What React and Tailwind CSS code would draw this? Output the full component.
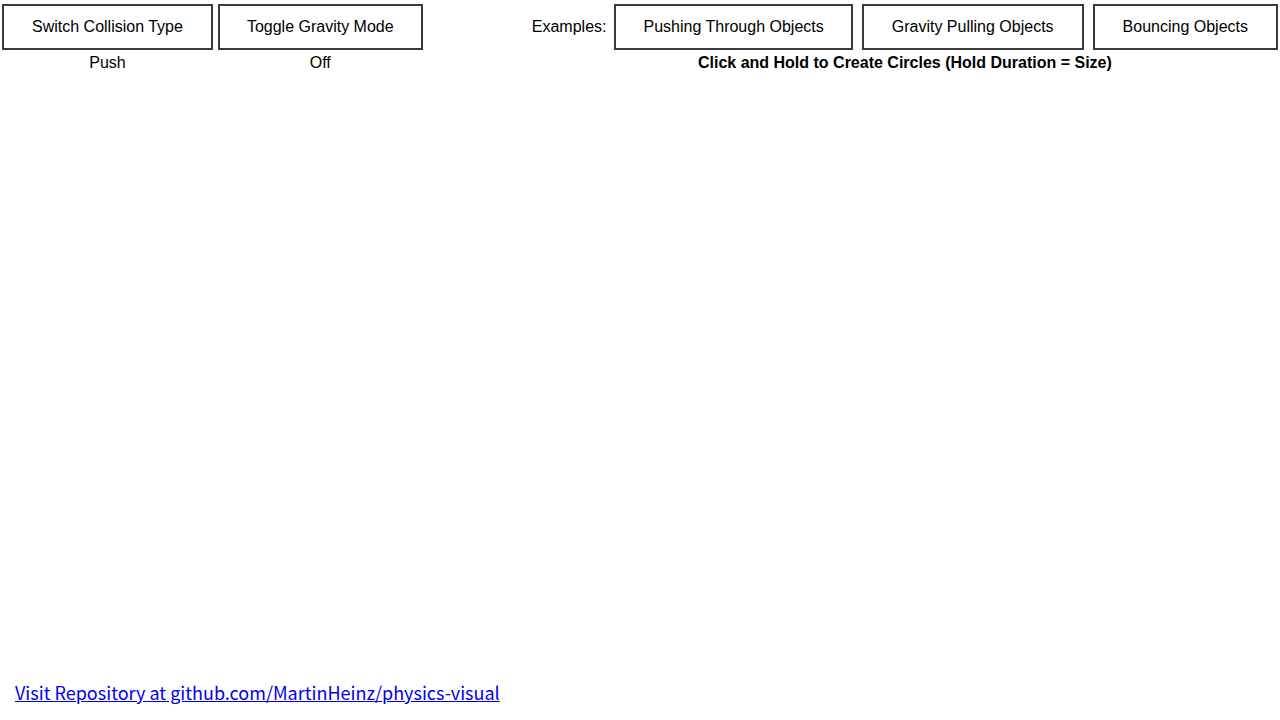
const btn =
  'border-2 border-[#3a3a3a] bg-white h-[46px] text-[16px] text-black whitespace-nowrap';

function ControlColumn({ label, value, pad }) {
  return (
    <div className="flex flex-col items-center">
      <button type="button" className={`${btn} ${pad}`}>
        {label}
      </button>
      <span className="mt-[2px] text-[16px] leading-[22px]">{value}</span>
    </div>
  );
}

export default function App() {
  const examples = [
    { name: 'Pushing Through Objects', pad: 'px-[27px]' },
    { name: 'Gravity Pulling Objects', pad: 'px-[28px]' },
    { name: 'Bouncing Objects', pad: 'px-[28px]' },
  ];

  return (
    <div className="flex h-screen flex-col bg-white text-black font-['Liberation_Sans',Arial,sans-serif]">
      <div className="flex items-start justify-between pl-[2px] pr-[2px] pt-[4px]">
        <div className="flex gap-[5px]">
          <ControlColumn label="Switch Collision Type" value="Push" pad="px-[28px]" />
          <ControlColumn label="Toggle Gravity Mode" value="Off" pad="px-[27px]" />
        </div>

        <div className="flex flex-col items-center">
          <div className="flex items-center gap-[9px]">
            <span className="mr-[-1px] text-[16px]">Examples:</span>
            {examples.map((ex) => (
              <button key={ex.name} type="button" className={`${btn} ${ex.pad}`}>
                {ex.name}
              </button>
            ))}
          </div>
          <span className="mt-[2px] text-[16px] font-bold leading-[22px]">
            Click and Hold to Create Circles (Hold Duration = Size)
          </span>
        </div>
      </div>

      <div className="flex-1" />

      <div className="pb-[13px] pl-[15px]">
        <a
          href="#"
          className="text-[18px] leading-[24px] text-[#0000ee] underline font-['Noto_Sans_CJK_SC','Noto_Sans',sans-serif]"
        >
          Visit Repository at github.com/MartinHeinz/physics-visual
        </a>
      </div>
    </div>
  );
}
